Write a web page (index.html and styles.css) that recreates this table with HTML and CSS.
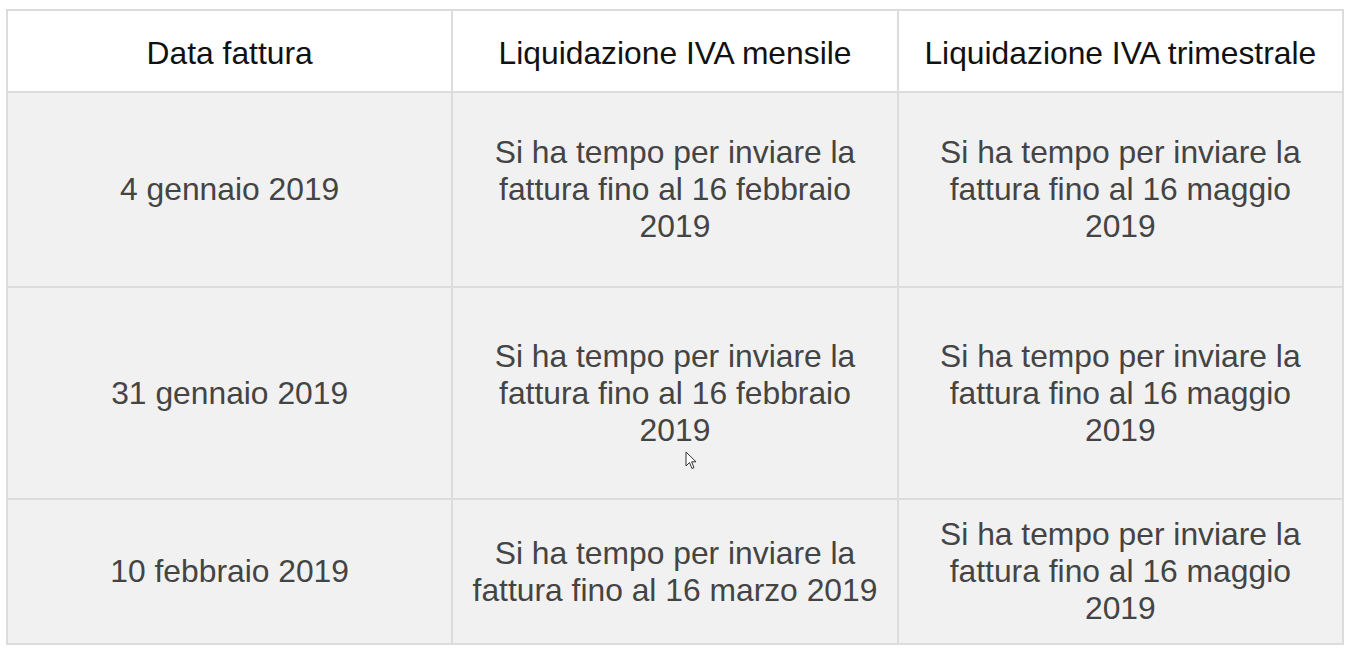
FILE: index.html
```html
<!DOCTYPE html>
<html lang="it">
<head>
<meta charset="utf-8">
<title>Scadenze fattura</title>
<link rel="stylesheet" href="styles.css">
</head>
<body>
<table class="deadlines">
  <colgroup><col class="c"><col class="c"><col class="c"></colgroup>
  <thead>
    <tr class="head-row">
      <th>Data fattura</th>
      <th>Liquidazione IVA mensile</th>
      <th>Liquidazione IVA trimestrale</th>
    </tr>
  </thead>
  <tbody>
    <tr class="r1">
      <td>4 gennaio 2019</td>
      <td>Si ha tempo per inviare la fattura fino al 16 febbraio 2019</td>
      <td>Si ha tempo per inviare la fattura fino al 16 maggio 2019</td>
    </tr>
    <tr class="r2">
      <td>31 gennaio 2019</td>
      <td>Si ha tempo per inviare la fattura fino al 16 febbraio 2019</td>
      <td>Si ha tempo per inviare la fattura fino al 16 maggio 2019</td>
    </tr>
    <tr class="r3">
      <td>10 febbraio 2019</td>
      <td>Si ha tempo per inviare la fattura fino al 16 marzo 2019</td>
      <td>Si ha tempo per inviare la fattura fino al 16 maggio 2019</td>
    </tr>
  </tbody>
</table>
<svg class="cursor" width="13" height="20" viewBox="0 0 13 20"><path d="M1 1 L1 15 L4.5 11.5 L7 17.5 L9 16.6 L6.6 10.8 L11 10.8 Z" fill="#fff" stroke="#333" stroke-width="1"/></svg>
</body>
</html>
```
FILE: styles.css
```css
html, body {
  margin: 0;
  padding: 0;
  background: #ffffff;
}
body {
  position: relative;
  width: 1348px;
  height: 649px;
  overflow: hidden;
  font-family: "Liberation Sans", Arial, sans-serif;
}
.deadlines {
  border-collapse: collapse;
  table-layout: fixed;
  width: 1338px;
  margin: 9px 0 0 6px;
  border: 2px solid #dcdcdc;
}
.deadlines .c {
  width: 33.333%;
}
.deadlines th,
.deadlines td {
  border: 2px solid #dcdcdc;
  text-align: center;
  vertical-align: middle;
  font-size: 31.8px;
  line-height: 37px;
  padding: 0 40px;
}
.deadlines th {
  font-weight: normal;
  color: #111111;
  background: #ffffff;
  padding: 4px 4px 0;
  white-space: nowrap;
}
.deadlines td {
  color: #444444;
  background: #f1f1f1;
}
.head-row { height: 82px; }
.r1 { height: 195px; }
.r2 { height: 212px; }
.r3 { height: 145px; }
.r3 td:nth-child(2) { padding: 0 6px; }
.cursor {
  position: absolute;
  left: 685px;
  top: 451px;
}
```
